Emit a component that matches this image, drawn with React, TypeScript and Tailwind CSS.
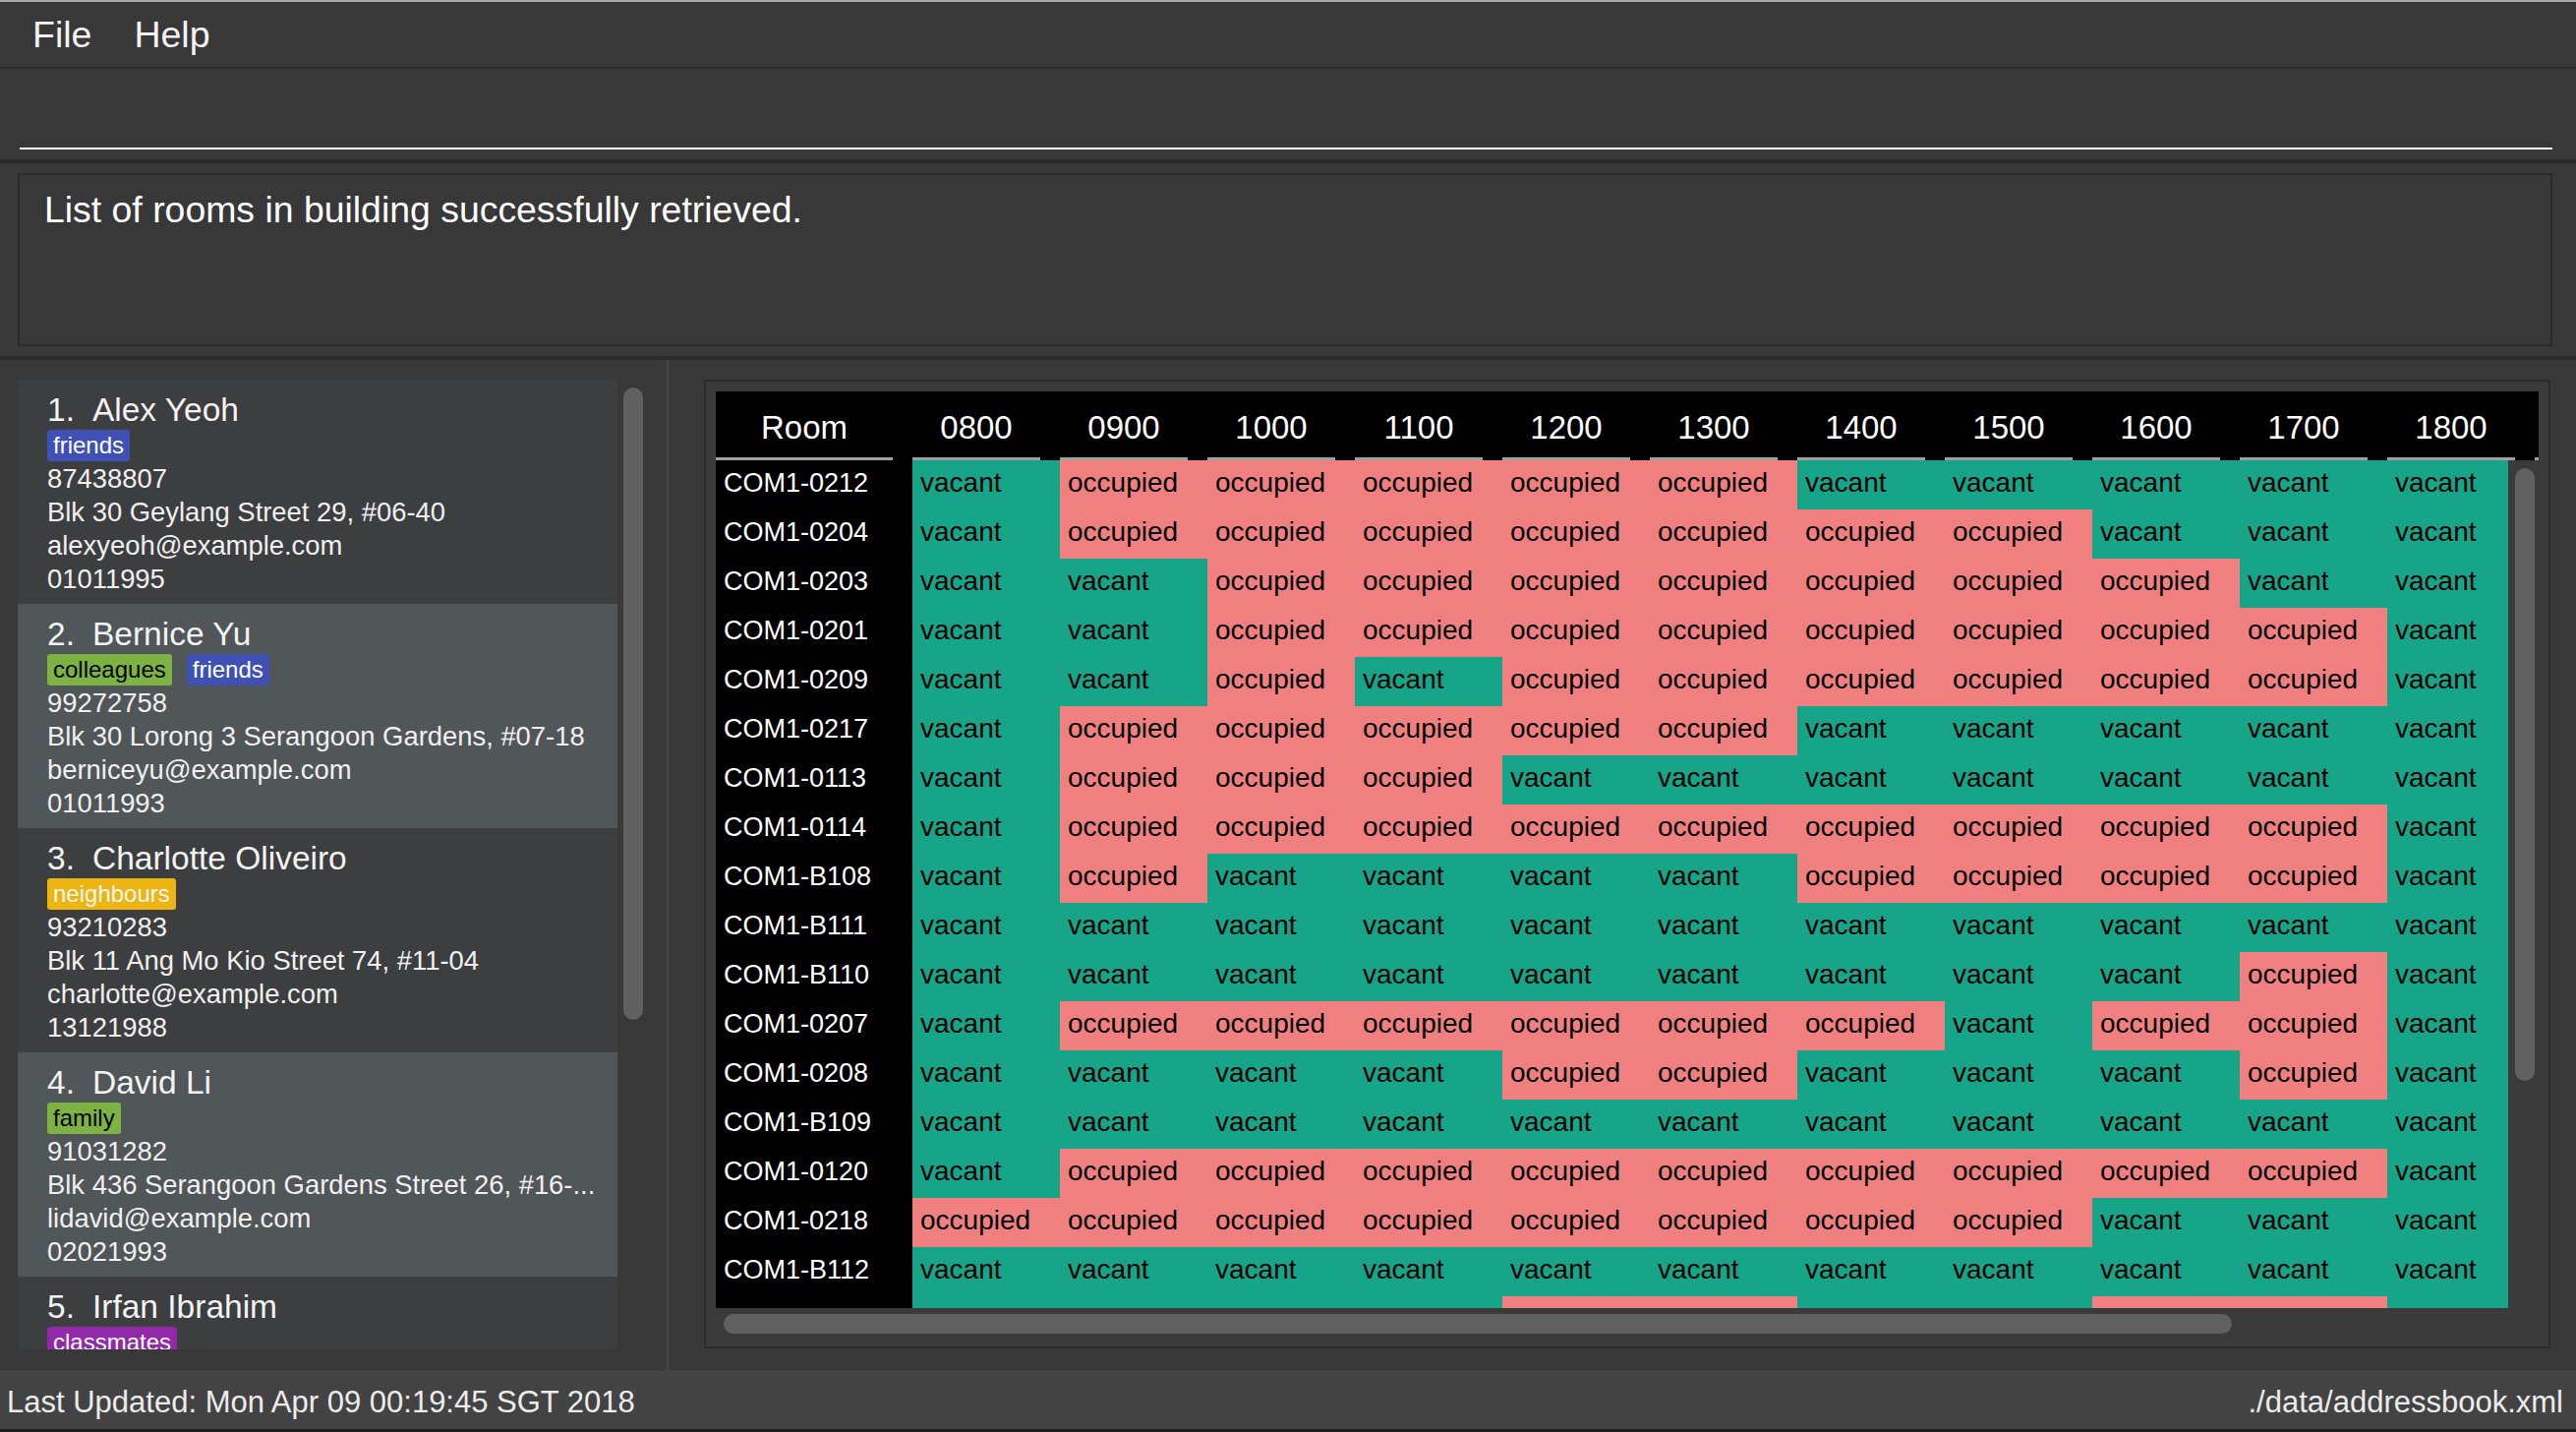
import React from "react";

const COLS = ["0800", "0900", "1000", "1100", "1200", "1300", "1400", "1500", "1600", "1700", "1800"];

const ROWS: [string, string][] = [
  ["COM1-0212", "vooooovvvvv"],
  ["COM1-0204", "vooooooovvv"],
  ["COM1-0203", "vvooooooovv"],
  ["COM1-0201", "vvoooooooov"],
  ["COM1-0209", "vvovoooooov"],
  ["COM1-0217", "vooooovvvvv"],
  ["COM1-0113", "vooovvvvvvv"],
  ["COM1-0114", "vooooooooov"],
  ["COM1-B108", "vovvvvoooov"],
  ["COM1-B111", "vvvvvvvvvvv"],
  ["COM1-B110", "vvvvvvvvvov"],
  ["COM1-0207", "voooooovoov"],
  ["COM1-0208", "vvvvoovvvov"],
  ["COM1-B109", "vvvvvvvvvvv"],
  ["COM1-0120", "vooooooooov"],
  ["COM1-0218", "oooooooovvv"],
  ["COM1-B112", "vvvvvvvvvvv"],
];

const PARTIAL = "vvvvoovvoov";

type Tag = { label: string; cls: string };

const PEOPLE: { id: number; name: string; tags: Tag[]; lines: string[] }[] = [
  {
    id: 1,
    name: "Alex Yeoh",
    tags: [{ label: "friends", cls: "bg-[#3f51b5] text-white" }],
    lines: ["87438807", "Blk 30 Geylang Street 29, #06-40", "alexyeoh@example.com", "01011995"],
  },
  {
    id: 2,
    name: "Bernice Yu",
    tags: [
      { label: "colleagues", cls: "bg-[#7cb342] text-black" },
      { label: "friends", cls: "bg-[#3f51b5] text-white" },
    ],
    lines: ["99272758", "Blk 30 Lorong 3 Serangoon Gardens, #07-18", "berniceyu@example.com", "01011993"],
  },
  {
    id: 3,
    name: "Charlotte Oliveiro",
    tags: [{ label: "neighbours", cls: "bg-[#ecb512] text-[#f5f5f5]" }],
    lines: ["93210283", "Blk 11 Ang Mo Kio Street 74, #11-04", "charlotte@example.com", "13121988"],
  },
  {
    id: 4,
    name: "David Li",
    tags: [{ label: "family", cls: "bg-[#7cb342] text-black" }],
    lines: ["91031282", "Blk 436 Serangoon Gardens Street 26, #16-...", "lidavid@example.com", "02021993"],
  },
  {
    id: 5,
    name: "Irfan Ibrahim",
    tags: [{ label: "classmates", cls: "bg-[#9129a8] text-white" }],
    lines: [],
  },
];

function PersonCard({ p, idx }: { p: (typeof PEOPLE)[number]; idx: number }) {
  const bg = idx % 2 === 0 ? "bg-[#3c3e3f]" : "bg-[#515658]";
  return (
    <div className={`w-[610px] h-[228px] shrink-0 pl-[30px] pt-[11px] ${bg}`}>
      <div className="flex text-[33.5px] leading-[40px] text-[#f3f3f3] whitespace-nowrap">
        <span>{p.id}.</span>
        <span className="ml-[18px]">{p.name}</span>
      </div>
      <div className="flex gap-[15px] h-[32px]">
        {p.tags.map((t) => (
          <span key={t.label} className={`h-[32px] px-[6px] rounded-[3px] text-[24px] leading-[32px] ${t.cls}`}>
            {t.label}
          </span>
        ))}
      </div>
      {p.lines.map((l, i) => (
        <div key={i} className="text-[27.4px] leading-[34px] pt-[1px] -mb-[1px] text-[#f0f0f0] whitespace-nowrap overflow-hidden">
          {l}
        </div>
      ))}
    </div>
  );
}

export default function App() {
  return (
    <div className="w-[2620px] h-[1456px] overflow-hidden bg-[#383838] flex flex-col font-['Liberation_Sans',Arial,sans-serif]">
      <div className="h-[2px] shrink-0 bg-[#a9a9a9]" />
      {/* menu bar */}
      <div className="h-[66px] shrink-0 flex gap-[43px] pl-[33px] pt-[1px] text-[37.5px] leading-[65px] text-[#f4f4f4]">
        <span>File</span>
        <span>Help</span>
      </div>
      <div className="h-[2px] shrink-0 bg-[#2b2b2b]" />
      {/* command box */}
      <div className="h-[92px] shrink-0 pt-[80px] pl-[20px]">
        <div className="w-[2576px] h-[2px] bg-white" />
      </div>
      <div className="h-[4px] shrink-0 bg-[#2b2b2b]" />
      {/* result display */}
      <div className="h-[196px] shrink-0 pt-[10px] pl-[18px]">
        <div className="w-[2578px] h-[176px] border-2 border-[#2b2b2b] pl-[25px] pt-[13px] text-[37.4px] leading-[44px] text-white">
          List of rooms in building successfully retrieved.
        </div>
      </div>
      <div className="h-[4px] shrink-0 bg-[#2b2b2b]" />
      {/* main split */}
      <div className="h-[1027px] shrink-0 flex">
        {/* person list */}
        <div className="w-[678px] shrink-0 pt-[20px] pl-[18px] flex gap-[6px]">
          <div className="w-[610px] h-[986px] overflow-hidden flex flex-col">
            {PEOPLE.map((p, i) => (
              <PersonCard key={p.id} p={p} idx={i} />
            ))}
          </div>
          <div className="w-[20px] pt-[8px]">
            <div className="w-[20px] h-[643px] rounded-full bg-[#606060]" />
          </div>
        </div>
        <div className="w-[2px] shrink-0 bg-[#474747]" />
        {/* rooms table */}
        <div className="flex-1 pt-[20px] pl-[36px]">
          <div className="w-[1878px] h-[985px] border-2 border-[#2b2b2b] bg-[#3a3a3a] p-[10px] flex flex-col">
            {/* header */}
            <div className="w-[1854px] h-[70px] shrink-0 bg-black flex overflow-hidden">
              <div className="w-[200px] shrink-0 flex flex-col">
                <div className="w-[180px] h-[67px] pt-[6px] text-center text-[33px] leading-[61px] text-white">Room</div>
                <div className="w-[180px] h-[3px] bg-[#a0a0a0]" />
              </div>
              {COLS.map((c) => (
                <div key={c} className="w-[150px] shrink-0 flex flex-col">
                  <div className="w-[130px] h-[67px] pt-[6px] text-center text-[33px] leading-[61px] text-white">{c}</div>
                  <div className="w-[130px] h-[3px] bg-[#a0a0a0]" />
                </div>
              ))}
              <div className="w-[4px] shrink-0 flex flex-col">
                <div className="h-[67px]" />
                <div className="w-[4px] h-[3px] bg-[#a0a0a0]" />
              </div>
            </div>
            {/* body */}
            <div className="h-[862px] shrink-0 flex">
              <div className="w-[1823px] h-[862px] overflow-hidden flex flex-col">
                {ROWS.map(([room, states]) => (
                  <div key={room} className="h-[50px] shrink-0 flex">
                    <div className="w-[200px] h-[50px] shrink-0 bg-black pl-[8px] text-[27px] leading-[46px] text-white">
                      {room}
                    </div>
                    {states.split("").map((s, i) => (
                      <div
                        key={i}
                        className={`w-[150px] h-[50px] shrink-0 pl-[8px] text-[28px] leading-[46px] text-black ${
                          s === "v" ? "bg-[#17a589]" : "bg-[#f08080]"
                        }`}
                      >
                        {s === "v" ? "vacant" : "occupied"}
                      </div>
                    ))}
                  </div>
                ))}
                <div className="h-[50px] shrink-0 flex">
                  <div className="w-[200px] h-[50px] shrink-0 bg-black" />
                  {PARTIAL.split("").map((s, i) => (
                    <div
                      key={i}
                      className={`w-[150px] h-[50px] shrink-0 ${s === "v" ? "bg-[#17a589]" : "bg-[#f08080]"}`}
                    />
                  ))}
                </div>
              </div>
              <div className="w-[31px] shrink-0 pt-[8px] pl-[7px]">
                <div className="w-[20px] h-[623px] rounded-full bg-[#606060]" />
              </div>
            </div>
            {/* horizontal scrollbar */}
            <div className="pt-[6px] pl-[8px]">
              <div className="w-[1534px] h-[20px] rounded-full bg-[#606060]" />
            </div>
          </div>
        </div>
      </div>
      {/* status bar */}
      <div className="h-[60px] shrink-0 bg-[#434343] flex justify-between pl-[7px] pr-[13px] pt-[5px] text-[31px] leading-[55px] text-[#ececec] whitespace-nowrap">
        <span>Last Updated: Mon Apr 09 00:19:45 SGT 2018</span>
        <span>./data/addressbook.xml</span>
      </div>
      <div className="h-[3px] shrink-0 bg-[#1e1e1e]" />
    </div>
  );
}
